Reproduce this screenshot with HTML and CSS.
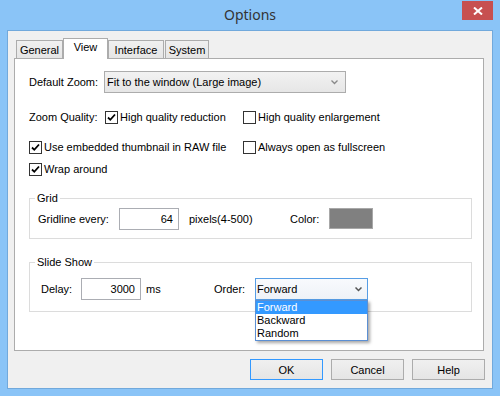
FILE: index.html
```html
<!DOCTYPE html>
<html lang="en">
<head>
  <meta charset="UTF-8">
  <title>Options</title>
  <link rel="stylesheet" href="styles.css">
</head>
<body>
  <div class="titlebar">
    <span></span>
    <span class="title">Options</span>
    <span class="close">
      <svg width="10" height="8" viewBox="0 0 10 8"><path d="M1 0.5 L9 7.5 M9 0.5 L1 7.5" stroke="#fff" stroke-width="2"/></svg>
    </span>
  </div>

  <div class="client">
    <div class="tabs">
      <div class="tab tab-general">General</div>
      <div class="tab tab-view active">View</div>
      <div class="tab tab-interface">Interface</div>
      <div class="tab tab-system">System</div>
    </div>

    <div class="panel">
      <div class="row row-zoom">
        <span class="label-zoom">Default Zoom:</span>
        <div class="combo combo-zoom">
          <span>Fit to the window (Large image)</span>
          <svg width="7" height="5" viewBox="0 0 7 5"><path d="M0.5 0.5 L3.5 3.5 L6.5 0.5" fill="none" stroke="#888" stroke-width="1.3"/></svg>
        </div>
      </div>

      <div class="row-check row-quality">
        <span class="label-quality">Zoom Quality:</span>
        <div class="check check-a">
          <span class="box"><svg width="11" height="11" viewBox="0 0 11 11"><path d="M2 5.5 L4.3 7.8 L9 2.5" fill="none" stroke="#000" stroke-width="1.8"/></svg></span>
          High quality reduction
        </div>
        <div class="check">
          <span class="box"></span>
          High quality enlargement
        </div>
      </div>

      <div class="row-check row-thumb">
        <div class="check check-b">
          <span class="box"><svg width="11" height="11" viewBox="0 0 11 11"><path d="M2 5.5 L4.3 7.8 L9 2.5" fill="none" stroke="#000" stroke-width="1.8"/></svg></span>
          Use embedded thumbnail in RAW file
        </div>
        <div class="check">
          <span class="box"></span>
          Always open as fullscreen
        </div>
      </div>

      <div class="row-check row-wrap">
        <div class="check">
          <span class="box"><svg width="11" height="11" viewBox="0 0 11 11"><path d="M2 5.5 L4.3 7.8 L9 2.5" fill="none" stroke="#000" stroke-width="1.8"/></svg></span>
          Wrap around
        </div>
      </div>

      <fieldset class="group group-grid">
        <legend>Grid</legend>
        <div class="row">
          <span class="g-label">Gridline every:</span>
          <div class="field">64</div>
          <span class="g-pixels">pixels(4-500)</span>
          <span class="g-color">Color:</span>
          <div class="swatch"></div>
        </div>
      </fieldset>

      <fieldset class="group group-slide">
        <legend>Slide Show</legend>
        <div class="row">
          <span class="s-label">Delay:</span>
          <div class="field">3000</div>
          <span class="s-ms">ms</span>
          <span class="s-order">Order:</span>
          <div class="order-wrap">
            <div class="combo combo-order">
              <span>Forward</span>
              <svg width="7" height="5" viewBox="0 0 7 5"><path d="M0.5 0.5 L3.5 3.5 L6.5 0.5" fill="none" stroke="#555" stroke-width="1.5"/></svg>
            </div>
            <div class="dropdown">
              <div class="item selected">Forward</div>
              <div class="item">Backward</div>
              <div class="item">Random</div>
            </div>
          </div>
        </div>
      </fieldset>
    </div>

    <div class="buttons">
      <div class="btn btn-ok">OK</div>
      <div class="btn">Cancel</div>
      <div class="btn">Help</div>
    </div>
  </div>
</body>
</html>
```

FILE: styles.css
```css
:root {
  --frame-blue: #8ac4f7;
  --frame-edge: #71a9dc;
  --face: #f0f0f0;
  --ctl-border: #acacac;
  --focus-blue: #3399ff;
}

html, body {
  margin: 0;
  width: 500px;
  height: 396px;
  overflow: hidden;
}

body {
  background-color: var(--frame-blue);
  font-family: 'Liberation Sans', Arial, sans-serif;
  font-size: 11px;
  color: #000;
}

.titlebar {
  height: 30px;
  display: grid;
  grid-template-columns: 1fr auto 1fr;
  align-items: start;
}

.title {
  font-family: 'Noto Sans', sans-serif;
  font-size: 14px;
  line-height: 30px;
  color: #333;
}

.close {
  justify-self: end;
  width: 31px;
  height: 19px;
  margin: 1px 7px 0 0;
  background-color: #c75050;
  display: flex;
  align-items: center;
  justify-content: center;
}

.client {
  margin: 0 7px;
  height: 359px;
  box-sizing: border-box;
  border: 1px solid var(--frame-edge);
  background-color: var(--face);
  padding: 7px 8px 0 6px;
}

/* tabs */
.tabs {
  display: flex;
  align-items: flex-end;
  height: 20px;
  padding-left: 2px;
}

.tab {
  height: 18px;
  box-sizing: border-box;
  border: 1px solid var(--ctl-border);
  border-bottom: none;
  background: linear-gradient(#f0f0f0, #e5e5e5);
  line-height: 18px;
  text-align: center;
}

.tab-general { width: 47px; }
.tab-interface { width: 56px; }
.tab-system { width: 44px; margin-left: 1px; }

.tab.active {
  width: 45px;
  height: 21px;
  margin-bottom: -1px;
  background: #fff;
  line-height: 17px;
  position: relative;
  z-index: 1;
}

.panel {
  height: 293px;
  box-sizing: border-box;
  border: 1px solid var(--ctl-border);
  background-color: #fff;
  padding: 12px 11px 0 14px;
}

.row {
  display: flex;
  align-items: center;
  height: 22px;
}

.label-zoom { width: 75px; }

.combo {
  box-sizing: border-box;
  height: 22px;
  display: flex;
  align-items: center;
  justify-content: space-between;
}

.combo-zoom {
  width: 242px;
  border: 1px solid var(--ctl-border);
  background: linear-gradient(#f2f2f2, #e6e6e6);
  padding: 0 7px 0 2px;
}

/* checkboxes */
.row-check {
  display: flex;
  align-items: center;
  height: 13px;
  line-height: 13px;
}

.row-quality { margin-top: 18px; }
.row-thumb { margin-top: 17px; }
.row-wrap { margin-top: 9px; }

.label-quality { width: 76px; }

.check {
  display: flex;
  align-items: center;
}

.check-a { width: 138px; }
.check-b { width: 214px; }

.box {
  width: 13px;
  height: 13px;
  box-sizing: border-box;
  border: 1px solid #333;
  background-color: #fff;
  margin-right: 2px;
  display: flex;
}

/* group boxes */
.group {
  margin: 0;
  border: 1px solid #dcdcdc;
  min-width: 0;
}

.group legend {
  padding: 0 2px;
  line-height: 13px;
}

.group-grid {
  margin-top: 16px;
  padding: 3px 8px 8px 8px;
}

.group-grid legend { margin-left: -3px; }

.group-slide {
  margin-top: 17px;
  padding: 9px 8px 11px 11px;
}

.group-slide legend { margin-left: -6px; }

.field {
  width: 60px;
  height: 22px;
  box-sizing: border-box;
  border: 1px solid #abadb3;
  background-color: #fff;
  text-align: right;
  padding-right: 5px;
  line-height: 20px;
}

.g-label { width: 81px; }
.g-pixels { width: 101px; margin-left: 10px; }
.g-color { width: 39px; }

.swatch {
  width: 44px;
  height: 21px;
  box-sizing: border-box;
  border: 1px solid #a8a8a8;
  background-color: #808080;
  align-self: flex-start;
}

.s-label { width: 40px; }
.s-ms { width: 68px; margin-left: 5px; }
.s-order { width: 41px; }

.order-wrap {
  position: relative;
  width: 113px;
}

.combo-order {
  border: 1px solid #569de5;
  background: linear-gradient(#f8fafd, #eef2f7);
  padding: 0 5px 0 1px;
}

.dropdown {
  position: absolute;
  top: 100%;
  left: 0;
  width: 113px;
  box-sizing: border-box;
  border: 1px solid #5b8fd3;
  background-color: #fff;
  box-shadow: 2px 2px 3px rgba(0, 0, 0, 0.35);
  z-index: 2;
}

.item {
  height: 13px;
  line-height: 13px;
  padding-left: 1px;
}

.item.selected {
  background-color: var(--focus-blue);
  color: #fff;
}

/* dialog buttons */
.buttons {
  display: flex;
  justify-content: flex-end;
  gap: 8px;
  margin: 8px -1px 0 0;
}

.btn {
  width: 73px;
  height: 21px;
  box-sizing: border-box;
  border: 1px solid var(--ctl-border);
  background: linear-gradient(#f0f0f0, #e5e5e5);
  display: flex;
  align-items: center;
  justify-content: center;
}

.btn-ok {
  border-color: var(--focus-blue);
}
```
